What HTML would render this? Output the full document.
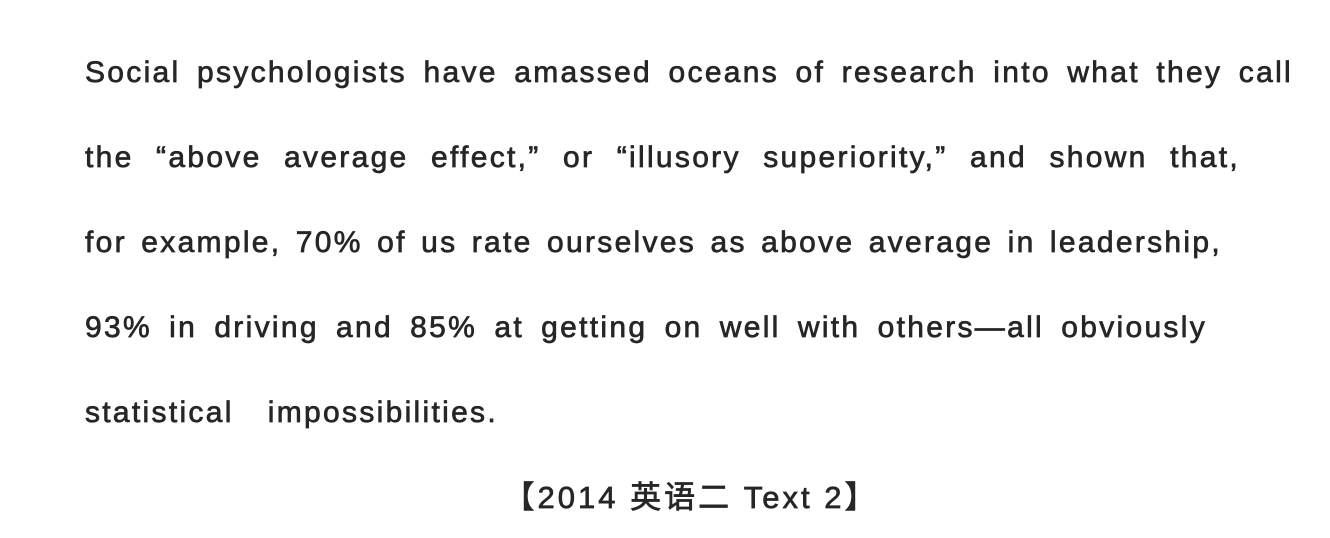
<!DOCTYPE html>
<html><head><meta charset="utf-8"><style>
html,body{margin:0;padding:0;background:#fff;}
body{width:1330px;height:538px;position:relative;overflow:hidden;font-family:"Liberation Sans","Noto Sans CJK SC",sans-serif;color:#262626;}
.l{position:absolute;left:85px;font-size:30px;letter-spacing:2.3px;line-height:32px;height:32px;white-space:nowrap;text-align:justify;text-align-last:justify;-webkit-text-stroke:0.7px #262626;}
.c{position:absolute;left:0;width:1382px;text-align:center;top:482px;font-size:31px;letter-spacing:3px;line-height:32px;-webkit-text-stroke:0.7px #262626;}
</style></head><body>
<div class="l" style="top:57px;width:1208px">Social psychologists have amassed oceans of research into what they call</div>
<div class="l" style="top:142px;width:1155px">the “above average effect,” or “illusory superiority,” and shown that,</div>
<div class="l" style="top:227px;width:1137px">for example, 70% of us rate ourselves as above average in leadership,</div>
<div class="l" style="top:312px;width:1122px">93% in driving and 85% at getting on well with others—all obviously</div>
<div class="l" style="top:397px;width:413px">statistical impossibilities.</div>
<div class="c">【2014 英语二 Text 2】</div>
</body></html>
